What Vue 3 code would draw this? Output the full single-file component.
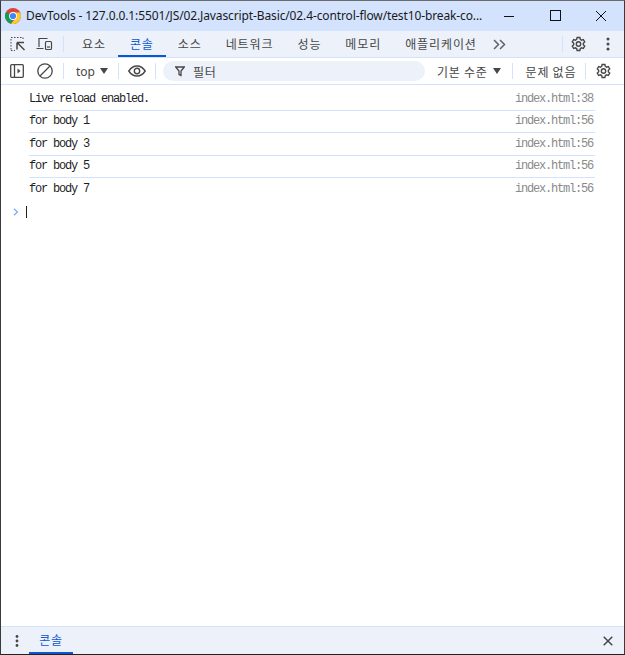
<script setup>
const logs = [
  { text: 'Live reload enabled.', src: 'index.html:38' },
  { text: 'for body 1', src: 'index.html:56' },
  { text: 'for body 3', src: 'index.html:56' },
  { text: 'for body 5', src: 'index.html:56' },
  { text: 'for body 7', src: 'index.html:56' },
]
const tabs = ['요소', '콘솔', '소스', '네트워크', '성능', '메모리', '애플리케이션']
const gear = 'M7.1 1.5h2.8l.4 1.9c.4.2.8.4 1.2.7l1.8-.6 1.4 2.4-1.4 1.3a5 5 0 0 1 0 1.6l1.4 1.3-1.4 2.4-1.8-.6c-.4.3-.8.5-1.2.7l-.4 1.9H7.1l-.4-1.9a5 5 0 0 1-1.2-.7l-1.8.6-1.4-2.4 1.4-1.3a5 5 0 0 1 0-1.6L2.300 5.900l1.400-2.400 1.800.6c.4-.3.8-.5 1.200-.7z'
</script>

<template>
  <div class="win">
    <header class="title">
      <svg class="chrome" width="16" height="16" viewBox="0 0 16 16">
        <circle cx="8" cy="8" r="8" fill="#db4437" />
        <path d="M8 8 1.100 4A8 8 0 0 0 6 15.750L9.700 9z" fill="#0f9d58" />
        <path d="M8 4.500h7.100A8 8 0 0 1 6 15.750L10.900 9.800z" fill="#fcc934" />
        <circle cx="8" cy="8" r="3.900" fill="#fff" />
        <circle cx="8" cy="8" r="3.100" fill="#4285f4" />
      </svg>
      <span class="title-text">DevTools - 127.0.0.1:5501/JS/02.Javascript-Basic/02.4-control-flow/test10-break-co...</span>
      <div class="win-btns">
        <svg width="12" height="12" viewBox="0 0 12 12"><path d="M1 6.500h10" stroke="#111" /></svg>
        <svg width="12" height="12" viewBox="0 0 12 12"><rect x="1.500" y=".5" width="10" height="10" fill="none" stroke="#111" /></svg>
        <svg width="12" height="12" viewBox="0 0 12 12"><path d="m1 1 10 10M11 1 1 11" stroke="#111" fill="none" /></svg>
      </div>
    </header>

    <nav class="tabs">
      <div class="tool-icons">
        <svg width="16" height="16" viewBox="0 0 16 16" fill="none" stroke="#474747">
          <path d="M1 13.500V1.500h12v3" stroke-dasharray="1.500 1.500" />
          <path d="M1 14.500h4" stroke-dasharray="1.500 1.500" />
          <path d="M7 6.500h7M7 6.500v7M7.500 7l7 7" stroke-width="1.500" />
        </svg>
        <svg width="17" height="15" viewBox="0 0 17 15" fill="none" stroke="#474747" stroke-width="1.200">
          <path d="M3 10V1.500h8.500M.5 11.500h7" />
          <rect x="9.500" y="4.500" width="6" height="8" rx="1" />
          <path d="M11 10h3" />
        </svg>
      </div>
      <span class="sep"></span>
      <div class="tab-list">
        <span v-for="(t, i) in tabs" :key="t" class="tab" :class="{ on: i === 1 }">{{ t }}</span>
      </div>
      <svg class="more" width="13" height="11" viewBox="0 0 13 11" fill="none" stroke="#5f6368" stroke-width="1.500">
        <path d="m1 1 4.500 4.500L1 10M7 1l4.500 4.500L7 10" />
      </svg>
      <span class="sep end-sep"></span>
      <svg class="gear" width="17" height="17" viewBox="0 0 17 17" fill="none" stroke="#474747" stroke-width="1.400">
        <path :d="gear" /><circle cx="8.500" cy="8" r="2.200" />
      </svg>
      <svg class="dots" width="4" height="14" viewBox="0 0 4 14" fill="#474747">
        <circle cx="2" cy="2" r="1.500" /><circle cx="2" cy="7" r="1.500" /><circle cx="2" cy="12" r="1.500" />
      </svg>
    </nav>

    <div class="toolbar">
      <svg class="ib first" width="14" height="14" viewBox="0 0 14 14" fill="none" stroke="#474747" stroke-width="1.300">
        <rect x=".7" y=".7" width="12.600" height="12.600" rx="1" /><path d="M4.500 1v12" />
        <path d="m7.500 4.500 3 2.500-3 2.500z" fill="#474747" stroke="none" />
      </svg>
      <svg class="ib" width="16" height="16" viewBox="0 0 16 16" fill="none" stroke="#474747" stroke-width="1.300">
        <circle cx="8" cy="8" r="7.200" /><path d="M3 13 13 3" />
      </svg>
      <span class="sep s1"></span>
      <span class="top">top</span>
      <span class="caret"></span>
      <span class="sep s2"></span>
      <svg class="eye" width="18" height="12" viewBox="0 0 18 12" fill="none" stroke="#474747" stroke-width="1.400">
        <path d="M.8 6C3 2.600 5.800 1 9 1s6 1.600 8.200 5C15 9.400 12.200 11 9 11S3 9.400.8 6z" /><circle cx="9" cy="6" r="2.700" />
      </svg>
      <span class="sep s3"></span>
      <div class="filter">
        <svg width="10" height="11" viewBox="0 0 10 11" fill="none" stroke="#474747" stroke-width="1.300">
          <path d="M.7 1h8.600L6 5v4.500L4 8.500V5z" />
        </svg>
        <span>필터</span>
      </div>
      <span class="level">기본 수준</span>
      <span class="caret c2"></span>
      <span class="sep s4"></span>
      <span class="issues">문제 없음</span>
      <span class="sep s5"></span>
      <svg class="gear g2" width="17" height="17" viewBox="0 0 17 17" fill="none" stroke="#474747" stroke-width="1.400">
        <path :d="gear" /><circle cx="8.500" cy="8" r="2.200" />
      </svg>
    </div>

    <main class="console">
      <div v-for="l in logs" :key="l.text + l.src" class="row">
        <span>{{ l.text }}</span><span class="src">{{ l.src }}</span>
      </div>
      <div class="prompt">
        <svg width="6" height="8" viewBox="0 0 6 8" fill="none" stroke="#7cacf8" stroke-width="1.300"><path d="m1 .8 3.400 3.200L1 7.200" /></svg>
        <span class="cursor"></span>
      </div>
    </main>

    <footer class="drawer">
      <svg width="4" height="12" viewBox="0 0 4 12" fill="#474747">
        <circle cx="2" cy="1.500" r="1.400" /><circle cx="2" cy="6" r="1.400" /><circle cx="2" cy="10.500" r="1.400" />
      </svg>
      <span class="dtab">콘솔</span>
      <svg class="dclose" width="10" height="10" viewBox="0 0 10 10" fill="none" stroke="#474747" stroke-width="1.500"><path d="m.7.700 8.600 8.600M9.300.7.700 9.300" /></svg>
    </footer>
  </div>
</template>

<style>
html, body { margin: 0; background: #fff; }
</style>

<style scoped>
.win {
  width: 625px; height: 655px; box-sizing: border-box; overflow: hidden;
  display: flex; flex-direction: column; background: #fff;
  border: 1px solid #3a3a3a; border-top-color: #6b6b6b; border-bottom-color: #222;
  font-family: "Noto Sans CJK KR", "Noto Sans", sans-serif; color: #474747;
}
.title {
  height: 30px; flex: none; display: flex; align-items: center; background: #d3e3fd;
  padding-left: 4px;
}
.title-text {
  margin-left: 5px; font: 12px/16px "Noto Sans", "Liberation Sans", sans-serif; letter-spacing: -.12px; color: #1a1a1a; white-space: nowrap; flex: none;
}
.chrome { flex: none; }
.win-btns { margin-left: auto; display: flex; gap: 34px; padding-right: 17px; }
.tabs {
  height: 26px; flex: none; display: flex; align-items: center; background: #edf2fa;
  border-bottom: 1px solid #d3e3fd;
}
.tool-icons { display: flex; align-items: center; gap: 10px; padding-left: 9px; width: 53px; }
.sep { width: 1px; height: 16px; background: #d3e3fd; flex: none; }
.tab-list { display: flex; height: 100%; margin-left: 6px; }
.tab {
  padding: 0 12px; height: 100%; box-sizing: border-box; display: flex; align-items: center; justify-content: center;
  font-size: 12px; letter-spacing: .9px; white-space: nowrap; color: #474747; padding-bottom: 2px;
}
.tab.on { color: #0b57d0; border-bottom: 2px solid #0b57d0; padding-bottom: 0; }
.more { margin-left: 4px; flex: none; }
.end-sep { margin-left: auto; }
.gear { flex: none; margin-left: 7px; }
.dots { flex: none; margin: 0 14px 0 19px; }
.toolbar {
  height: 26px; flex: none; display: flex; align-items: center; border-bottom: 1px solid #d3e3fd; font-size: 12px;
}
.ib { flex: none; }
.first { margin-left: 9px; margin-right: 13px; }
.s1 { margin: 0 12px 0 10px; }
.top { color: #474747; font: 12px "Noto Sans", sans-serif; }
.caret {
  width: 0; height: 0; border-left: 4px solid transparent; border-right: 4px solid transparent;
  border-top: 6px solid #474747; margin-left: 5px; flex: none;
}
.s2 { margin: 0 9px 0 10px; }
.eye { flex: none; }
.s3 { margin: 0 7px 0 9px; }
.filter {
  width: 262px; height: 20px; flex: none; box-sizing: border-box; border-radius: 10px; background: #edf2fa;
  display: flex; align-items: center; gap: 8px; padding-left: 12px; font-size: 12px; letter-spacing: .75px; color: #474747;
}
.level { margin-left: 12px; white-space: nowrap; letter-spacing: .75px; }
.c2 { margin-left: 5px; }
.s4 { margin: 0 13px 0 11px; }
.issues { white-space: nowrap; letter-spacing: .75px; }
.s5 { margin: 0 9px 0 9px; }
.g2 { margin-left: 0; }
.console {
  flex: 1; padding: 3px 29px 0 28px; min-height: 0; background: #fff;
  font: 12px/14px "Liberation Mono", "DejaVu Sans Mono", monospace; letter-spacing: -1.2px; color: #1f1f1f;
}
.row {
  height: 22.500px; box-sizing: border-box; display: flex; justify-content: space-between; align-items: center;
  border-bottom: 1px solid #d3e3fd; padding-right: 2px;
}
.row:nth-child(5) { border-bottom: none; }
.src { color: #8a8a8a; }
.prompt { height: 22px; display: flex; align-items: center; margin-left: -16px; gap: 7px; }
.cursor { width: 1px; height: 12px; background: #1f1f1f; }
.drawer {
  height: 28px; flex: none; box-sizing: border-box; display: flex; align-items: center; background: #edf2fa;
  border-top: 1px solid #d3e3fd; padding-left: 14px;
}
.dtab {
  margin-left: 10px; width: 44px; height: 100%; box-sizing: border-box; display: flex; align-items: center; justify-content: center;
  color: #0b57d0; font-size: 12px; letter-spacing: .75px; border-bottom: 2px solid #0b57d0;
}
.dclose { margin-left: auto; margin-right: 11px; }
</style>
